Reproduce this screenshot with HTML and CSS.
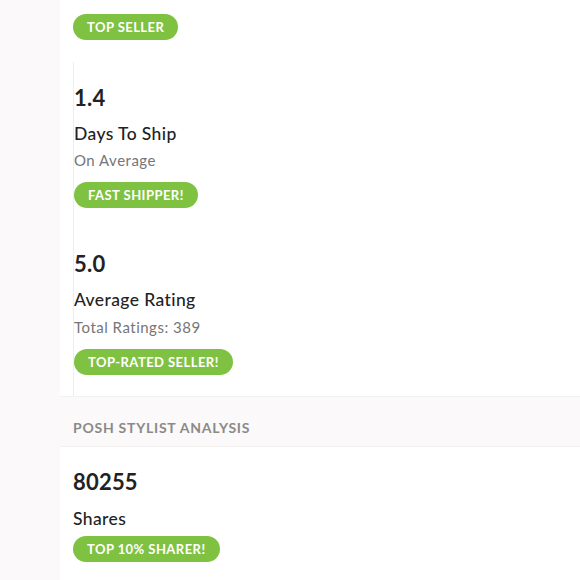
FILE: index.html
```html
<!DOCTYPE html>
<html>
<head>
<meta charset="utf-8">
<link rel="stylesheet" href="styles.css">
</head>
<body>
<div class="page">
  <aside class="side"></aside>
  <main class="main">
    <div class="top">
      <span class="badge">Top Seller</span>
    </div>
    <div class="stats">
      <div class="stat">
        <div class="num">1.4</div>
        <div class="label">Days To Ship</div>
        <div class="sub">On Average</div>
        <span class="badge">Fast Shipper!</span>
      </div>
      <div class="stat">
        <div class="num">5.0</div>
        <div class="label">Average Rating</div>
        <div class="sub">Total Ratings: 389</div>
        <span class="badge">Top-Rated Seller!</span>
      </div>
    </div>
    <div class="band">Posh Stylist Analysis</div>
    <div class="analysis">
      <div class="num">80255</div>
      <div class="label label-tight">Shares</div>
      <span class="badge">Top 10% Sharer!</span>
    </div>
  </main>
</div>
</body>
</html>
```
FILE: styles.css
```css
html, body {
  margin: 0;
  padding: 0;
  background: #ffffff;
}
body {
  font-family: "Lato", "Open Sans", sans-serif;
  color: #222222;
}
.page {
  display: flex;
  min-height: 580px;
}
.side {
  width: 60px;
  flex: 0 0 60px;
  background: #fbf9f9;
}
.main {
  flex: 1;
  background: #ffffff;
}
.top {
  padding: 14px 0 22px 13px;
}
.stats {
  margin-left: 13px;
  border-left: 1px solid #eeeeee;
}
.stat {
  padding: 21.5px 0 20.5px 0;
}
.num {
  font-size: 22px;
  line-height: 28px;
  font-weight: 700;
  color: #222222;
  letter-spacing: 0.2px;
}
.label {
  margin-top: 11px;
  font-size: 17.5px;
  line-height: 22px;
  font-weight: 500;
  letter-spacing: 0.4px;
  color: #222222;
}
.sub {
  margin-top: 5.4px;
  font-size: 15px;
  line-height: 20px;
  letter-spacing: 0.5px;
  color: #767676;
}
.badge {
  display: inline-block;
  margin-top: 12.5px;
  height: 26px;
  line-height: 26px;
  padding: 0 14px;
  border-radius: 13px;
  background: #7fc242;
  color: #ffffff;
  font-size: 13px;
  font-weight: 700;
  letter-spacing: 0.45px;
  text-transform: uppercase;
}
.top .badge {
  margin-top: 0;
}
.band {
  background: #fbf9f9;
  border-top: 1px solid #f4f1f1;
  border-bottom: 1px solid #f4f1f1;
  padding: 21px 0 8px 13px;
  height: 20px;
  line-height: 20px;
  font-size: 14px;
  font-weight: 700;
  letter-spacing: 0.75px;
  color: #8a8a8a;
  text-transform: uppercase;
}
.analysis {
  padding: 21px 0 20px 13px;
}
.analysis .label {
  margin-top: 12px;
}
.label-tight + .badge {
  margin-top: 6px;
}
```
